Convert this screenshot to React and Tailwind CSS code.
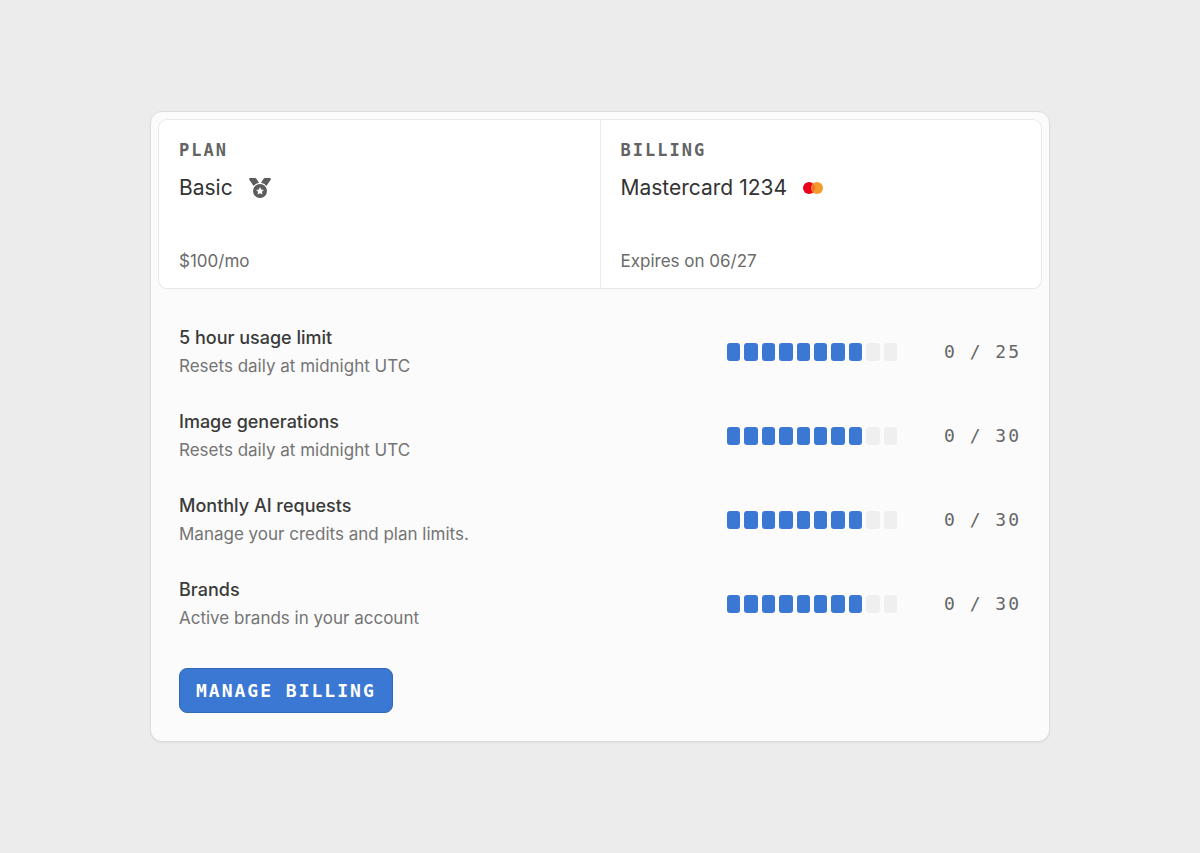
const usage = [
  { title: '5 hour usage limit', description: 'Resets daily at midnight UTC', used: 0, limit: 25, filled: 8 },
  { title: 'Image generations', description: 'Resets daily at midnight UTC', used: 0, limit: 30, filled: 8 },
  { title: 'Monthly AI requests', description: 'Manage your credits and plan limits.', used: 0, limit: 30, filled: 8 },
  { title: 'Brands', description: 'Active brands in your account', used: 0, limit: 30, filled: 8 },
];

function MedalIcon() {
  return (
    <svg width="22" height="20" viewBox="0 0 22 20" fill="#5c5c5c" aria-hidden="true">
      <path d="M1.2 0h5q.8 0 1.2.7l2.6 4.1a8.4 8.4 0 0 0-5.4 3.2L.3 1.7Q-.4.2 1.2 0Z" />
      <path d="M20.8 0h-5q-.8 0-1.2.7l-2.6 4.1a8.4 8.4 0 0 1 5.4 3.2l4.3-6.3Q22.4.2 20.8 0Z" />
      <path
        fillRule="evenodd"
        d="M11 6a7 7 0 1 0 0 14 7 7 0 0 0 0-14Zm0 3 1.2 2.5 2.7.4-2 1.9.5 2.7-2.4-1.3-2.4 1.3.5-2.7-2-1.9 2.7-.4Z"
      />
    </svg>
  );
}

function MastercardIcon() {
  return (
    <svg width="20" height="12" viewBox="0 0 20 12" aria-hidden="true">
      <circle cx="6" cy="6" r="6" fill="#eb001b" />
      <circle cx="14" cy="6" r="6" fill="#f59a2c" />
      <path d="M10 1.53a6 6 0 0 1 0 8.94 6 6 0 0 1 0-8.94Z" fill="#f0742a" />
    </svg>
  );
}

function SummaryCell({ label, value, icon, note }) {
  return (
    <div className="flex-1 px-5 pt-4 pb-[13px]">
      <h2 className="font-['DejaVu_Sans_Mono',monospace] text-[17px] leading-7 font-bold tracking-[2px] text-[#636363]">
        {label}
      </h2>
      <div className="mt-2 flex items-center gap-4">
        <span className="text-[21px] leading-8 text-[#333333]">{value}</span>
        {icon}
      </div>
      <p className="mt-[43px] text-[17px] leading-7 text-[#6b6b6b]">{note}</p>
    </div>
  );
}

function UsageRow({ title, description, used, limit, filled }) {
  return (
    <li className="flex items-center">
      <div className="flex-1">
        <h3 className="text-lg leading-7 font-medium text-[#3a3a3a]">{title}</h3>
        <p className="text-[17px] leading-7 text-[#747474]">{description}</p>
      </div>
      <div className="flex w-[170px] gap-1">
        {Array.from({ length: 10 }, (_, i) => (
          <span key={i} className={i < filled ? 'h-[18px] flex-1 rounded-[3px] bg-[#3b78d4]' : 'h-[18px] flex-1 rounded-[3px] bg-[#efefef]'} />
        ))}
      </div>
      <span className="w-[124px] text-right font-['DejaVu_Sans_Mono',monospace] text-lg leading-7 tracking-[2px] text-[#666666]">
        {used} / {limit}
      </span>
    </li>
  );
}

export default function App() {
  return (
    <main className="flex min-h-screen items-center justify-center bg-[#ececec] p-8 font-['Inter',sans-serif]">
      <section className="w-full max-w-[900px] rounded-xl border border-[#dcdcdc] bg-[#fbfbfb] p-2 shadow-xs">
        <div className="flex divide-x divide-[#ebebeb] rounded-lg bg-white shadow-xs ring-1 ring-[#e8e8e8]">
          <SummaryCell label="PLAN" value="Basic" icon={<MedalIcon />} note="$100/mo" />
          <SummaryCell label="BILLING" value="Mastercard 1234" icon={<MastercardIcon />} note="Expires on 06/27" />
        </div>
        <div className="px-5 pt-9 pb-5">
          <ul className="flex flex-col gap-7">
            {usage.map((item) => (
              <UsageRow key={item.title} {...item} />
            ))}
          </ul>
          <button
            type="button"
            className="mt-9 h-[45px] rounded-lg border border-[#3468b8] bg-[#3b78d4] px-4 font-['DejaVu_Sans_Mono',monospace] text-lg font-bold tracking-[2px] text-white"
          >
            MANAGE BILLING
          </button>
        </div>
      </section>
    </main>
  );
}
